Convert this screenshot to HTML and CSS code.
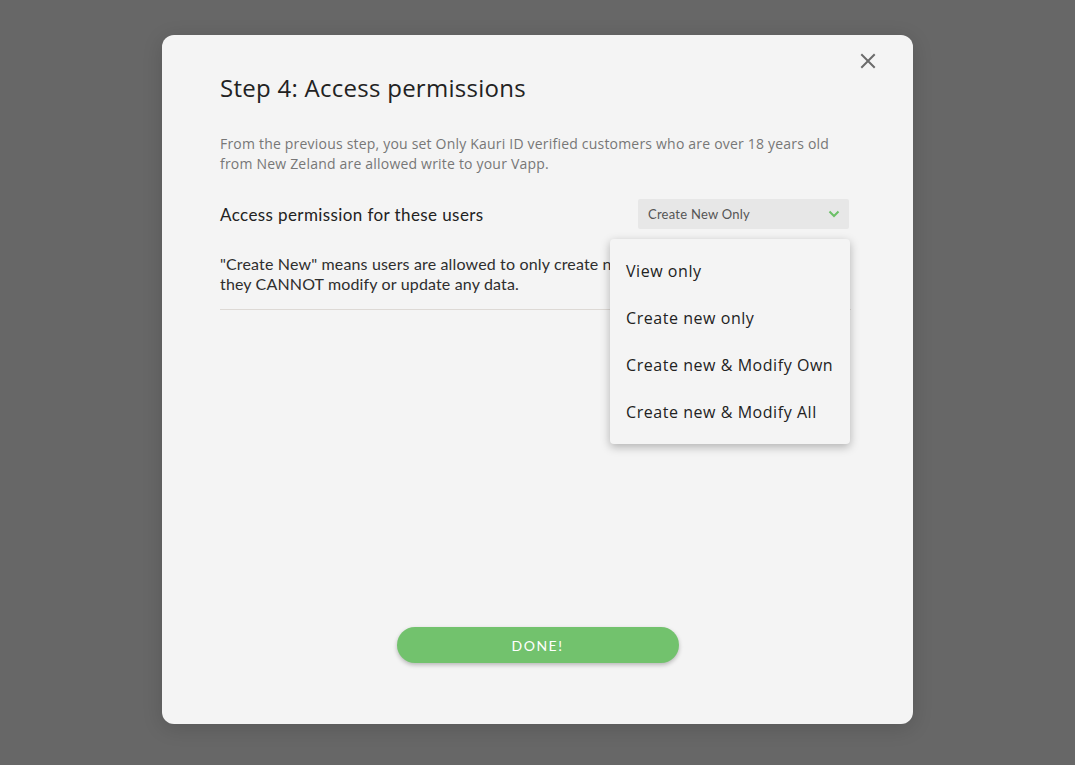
FILE: index.html
```html
<!DOCTYPE html>
<html>
<head>
<meta charset="utf-8">
<link rel="stylesheet" href="styles.css">
</head>
<body>
<div class="overlay">
  <div class="modal">
    <button class="close" aria-label="Close">
      <svg width="16" height="16" viewBox="0 0 16 16"><path d="M2 2L14 14M14 2L2 14" stroke="#6b6b6b" stroke-width="2" stroke-linecap="square"/></svg>
    </button>
    <h1 class="title">Step 4: Access permissions</h1>
    <p class="intro">From the previous step, you set Only Kauri ID verified customers who are over 18 years old from New Zeland are allowed write to your Vapp.</p>
    <div class="perm-row">
      <span class="perm-label">Access permission for these users</span>
      <div class="select-wrap">
        <div class="select">
          <span>Create New Only</span>
          <svg width="12" height="8" viewBox="0 0 12 8"><path d="M1.5 1.5L6 6L10.5 1.5" fill="none" stroke="#6cc067" stroke-width="2"/></svg>
        </div>
        <ul class="menu">
          <li>View only</li>
          <li>Create new only</li>
          <li>Create new &amp; Modify Own</li>
          <li>Create new &amp; Modify All</li>
        </ul>
      </div>
    </div>
    <p class="desc">"Create New" means users are allowed to only create new data to your Vapp, but<br>they CANNOT modify or update any data.</p>
    <hr class="divider">
    <div class="spacer"></div>
    <div class="actions">
      <button class="done">DONE!</button>
    </div>
  </div>
</div>
</body>
</html>
```
FILE: styles.css
```css
html, body {
  margin: 0;
  padding: 0;
  height: 100%;
}
body {
  background: #676767;
  font-family: "Open Sans", sans-serif;
}
.overlay {
  height: 765px;
  padding-top: 35px;
  box-sizing: border-box;
  display: flex;
  justify-content: center;
}
.modal {
  position: relative;
  width: 751px;
  height: 689px;
  background: #f4f4f4;
  border-radius: 12px;
  box-sizing: border-box;
  padding: 36px 64px 0 58px;
  display: flex;
  flex-direction: column;
  box-shadow: 0 4px 20px rgba(0,0,0,0.15);
}
.close {
  position: absolute;
  top: 18px;
  right: 37px;
  background: none;
  border: 0;
  padding: 0;
  width: 16px;
  height: 16px;
  cursor: pointer;
}
.close svg { display: block; }
.title {
  margin: 0;
  font-family: "Open Sans", sans-serif;
  font-weight: 400;
  font-size: 24px;
  line-height: 34px;
  color: #222;
  letter-spacing: 0.27px;
}
.intro {
  margin: 29px 0 0;
  font-size: 14px;
  line-height: 20px;
  color: #777;
  letter-spacing: 0.2px;
  max-width: 620px;
}
.perm-row {
  margin-top: 25px;
  display: flex;
  justify-content: space-between;
  align-items: center;
}
.perm-label {
  font-family: Lato, sans-serif;
  font-size: 17px;
  letter-spacing: 0.4px;
  color: #222;
}
.select-wrap {
  position: relative;
  width: 211px;
}
.select {
  height: 30px;
  background: #e7e7e7;
  display: flex;
  align-items: center;
  justify-content: space-between;
  padding: 0 9px 0 10px;
  font-family: Lato, sans-serif;
  font-size: 13px;
  letter-spacing: 0.25px;
  color: #555;
  border-radius: 2px;
}
.menu {
  position: absolute;
  top: 40px;
  right: -1px;
  width: 240px;
  margin: 0;
  padding: 9px 0 8px;
  list-style: none;
  background: #f4f4f4;
  border-radius: 4px;
  box-shadow: 0 3px 10px rgba(0,0,0,0.28);
  z-index: 2;
}
.menu li {
  height: 47px;
  line-height: 47px;
  padding-left: 16px;
  font-size: 16px;
  letter-spacing: 0.55px;
  color: #222;
}
.desc {
  margin: 25px 0 0;
  font-family: Lato, sans-serif;
  font-size: 16px;
  line-height: 20px;
  letter-spacing: 0.15px;
  color: #2e2e2e;
  width: 640px;
}
.divider {
  margin: 15px 0 0;
  border: 0;
  border-top: 1px solid #ddd9d5;
  width: 631px;
}
.spacer { flex: 1; }
.actions {
  display: flex;
  justify-content: center;
  padding-bottom: 61px;
  margin-left: 6px;
}
.done {
  width: 282px;
  height: 36px;
  border: 0;
  border-radius: 18px;
  background: #72c26d;
  color: #fff;
  font-family: Lato, sans-serif;
  font-size: 14px;
  letter-spacing: 1.5px;
  box-shadow: 0 2px 4px rgba(0,0,0,0.25);
}
```
